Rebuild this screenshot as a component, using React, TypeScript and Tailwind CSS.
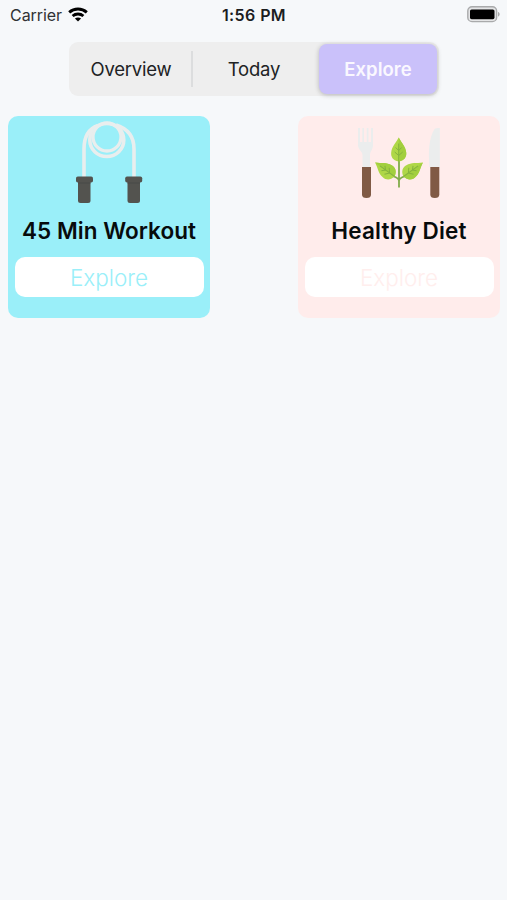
import type { ReactNode } from 'react';

function WifiIcon() {
  return (
    <svg width="20" height="15" viewBox="0 0 20 15" fill="none" stroke="#000" strokeWidth="2.900" className="-mt-[2px]">
      <path d="M1.2 5.3C6.2.8 13.800.8 18.800 5.3" />
      <path d="M4.6 9c3.100-2.700 7.700-2.700 10.800 0" />
      <path d="M10 14.500 6.900 11.600c1.700-1.500 4.500-1.500 6.200 0Z" fill="#000" stroke="none" />
    </svg>
  );
}

function BatteryIcon() {
  return (
    <svg width="34" height="18" viewBox="0 0 34 18">
      <rect x="0.8" y="0.8" width="28.800" height="14.800" rx="4.200" fill="#e4e5e6" stroke="#a9aaab" strokeWidth="1.400" />
      <rect x="3" y="3.500" width="24.500" height="9.700" rx="1.600" fill="#000" />
      <path d="M31 6c2.200.7 2.200 3.800 0 4.500Z" fill="#a9aaab" />
    </svg>
  );
}

function JumpRope() {
  return (
    <svg width="100" height="100" viewBox="0 0 100 100" className="block">
      <g fill="none" stroke="#e9eeee" strokeWidth="3.600">
        <path d="M24 66V37C24 26 28 17 38 13.500" />
        <path d="M74 66V37C74 26 69 17 56 13" />
        <ellipse cx="46.800" cy="28" rx="17" ry="16.500" />
        <circle cx="47" cy="25" r="14" strokeWidth="3.300" />
      </g>
      <g fill="#53534f">
        <rect x="16" y="64.500" width="17" height="6" rx="1.800" />
        <path d="M18 70h12.500v18.500a2.500 2.500 0 0 1-2.500 2.500h-7.500a2.500 2.500 0 0 1-2.500-2.500Z" />
        <rect x="65.200" y="64.500" width="17" height="6" rx="1.800" />
        <path d="M67.500 70H80v18.500a2.500 2.500 0 0 1-2.500 2.500H70a2.500 2.500 0 0 1-2.500-2.500Z" />
      </g>
      <path d="M18 71h12.500M67.500 71H80" stroke="#494a49" />
    </svg>
  );
}

function Leaf({ transform }: { transform: string }) {
  return (
    <g transform={transform}>
      <path d="M0 0C-6-1-8-5-7.500-9-7-15-3-18 0-24 3-18 7-15 7.500-9 8-5 6-1 0 0Z" fill="#afd747" />
      <path d="M0 0C6-1 8-5 7.500-9 7-15 3-18 0-24Z" fill="#a2cf3e" />
      <path d="M0 0V-18M0-6l-4-3.500M0-6l4-3.500M0-11l-3-3M0-11l3-3" fill="none" stroke="#85b33e" strokeWidth="1" />
    </g>
  );
}

function HealthyPlate() {
  return (
    <svg width="100" height="85" viewBox="0 0 100 85" className="block">
      <path d="M8 8v17c0 5 4.500 6 4.500 10v12h7.500V35c0-4 3-5 3-10V8h-2v14h-2.500V8h-1.800v14h-2.700V8h-1.700v14H10V8Z" fill="#ebeded" />
      <path d="M89.800 8v39H79.500C78 31 79 18 84.500 9c1-1 3-1 5.300-1Z" fill="#ebeded" />
      <g fill="#805a45">
        <path d="M12 47h9v27.500q0 3.500-4.500 3.500t-4.500-3.500Z" />
        <path d="M80.300 47h9v27.500q0 3.500-4.500 3.500t-4.500-3.500Z" />
      </g>
      <path d="M49 39v28.500M49 60.500c-1-3-4-4-8-5M49 60.500c1-3 4-4 8-5" fill="none" stroke="#82ac4b" strokeWidth="1.800" />
      <Leaf transform="translate(48.700 41.500)" />
      <Leaf transform="translate(44.500 56.500) rotate(-54)" />
      <Leaf transform="translate(53.500 56.500) rotate(54)" />
    </svg>
  );
}

type CardProps = { title: string; titleClass: string; cardClass: string; actionClass: string; children: ReactNode };

function Card({ title, titleClass, cardClass, actionClass, children }: CardProps) {
  return (
    <article className={`flex h-[202px] w-[202px] flex-col items-center rounded-[10px] px-[6.5px] ${cardClass}`}>
      <div className="flex h-[96px] w-full shrink-0 items-start justify-center pl-[2px]">{children}</div>
      <h2 className={`h-[45px] shrink-0 whitespace-nowrap text-[22.5px] leading-[37px] font-semibold text-[#070b0c] ${titleClass}`}>{title}</h2>
      <button className={`h-[40px] w-full shrink-0 rounded-[10px] bg-white text-[22.5px] leading-[41px] font-light ${actionClass}`}>Explore</button>
    </article>
  );
}

export default function App() {
  return (
    <main className="flex h-[900px] w-[507px] flex-col overflow-hidden bg-[#f6f8fa] font-['Inter','Liberation_Sans',sans-serif]">
      <header className="grid h-[30px] shrink-0 grid-cols-3 items-center pl-[10px] pr-[6px] text-[16px] text-[#303234]">
        <div className="flex items-center gap-[6px]">
          <span className="tracking-[-0.05px]">Carrier</span>
          <WifiIcon />
        </div>
        <time className="-ml-[3px] text-center tracking-[0.4px] font-semibold text-[#1b1d1f]">1:56 PM</time>
        <div className="flex justify-end"><BatteryIcon /></div>
      </header>
      <nav className="mt-[12px] ml-[69px] flex h-[54px] w-[370px] shrink-0 items-center rounded-[9px] bg-[#eeeeee] p-[2px] text-[18.500px] text-[#202224]">
        <button className="h-full w-[120px] pt-[2px] tracking-[-0.2px]">Overview</button>
        <span className="h-[36px] w-[2px] bg-[#dcddde]" />
        <button className="h-full w-[126px] pt-[2px] pr-[4px] tracking-[-0.2px]">Today</button>
        <button className="h-[50px] w-[118px] rounded-[8px] bg-[#cac1fa] pt-[2px] font-semibold text-[#faf8ff] shadow-[0_1px_5px_rgba(0,0,0,0.24)]">Explore</button>
      </nav>
      <section className="mt-[20px] flex shrink-0 justify-between pr-[7px] pl-[8px]">
        <Card title="45 Min Workout" titleClass="tracking-[0.05px]" cardClass="bg-[#9aeff9]" actionClass="text-[#9aeff9]">
          <div className="-mt-[4px]"><JumpRope /></div>
        </Card>
        <Card title="Healthy Diet" titleClass="tracking-[0.18px]" cardClass="bg-[#ffeceb]" actionClass="text-[#ffeeed]">
          <div className="mt-[4px]"><HealthyPlate /></div>
        </Card>
      </section>
    </main>
  );
}
